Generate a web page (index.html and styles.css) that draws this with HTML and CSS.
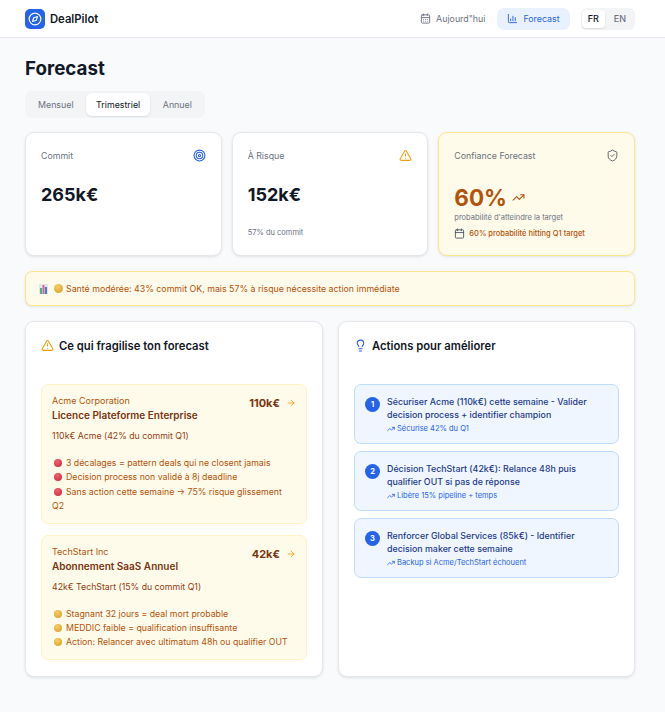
FILE: index.html
```html
<!DOCTYPE html>
<html lang="fr">
<head>
    <meta charset="UTF-8">
    <meta name="viewport" content="width=device-width, initial-scale=1.0">
    <title>DealPilot - Forecast</title>
    <link rel="stylesheet" href="styles.css">
</head>
<body>
    <header class="topbar">
        <div class="brand">
            <span class="brand-logo">
                <svg width="14" height="14" viewBox="0 0 24 24" fill="none" stroke="#fff" stroke-width="2" stroke-linecap="round" stroke-linejoin="round"><circle cx="12" cy="12" r="10"/><path d="M16.2 7.8l-2 6.4-6.4 2 2-6.4z"/></svg>
            </span>
            <span class="brand-name">DealPilot</span>
        </div>
        <nav class="topnav">
            <a class="nav-link">
                <svg width="11" height="11" viewBox="0 0 24 24" fill="none" stroke="currentColor" stroke-width="2" stroke-linecap="round" stroke-linejoin="round"><path d="M8 2v4M16 2v4"/><rect x="3" y="4" width="18" height="18" rx="2"/><path d="M3 10h18M8 14h.01M12 14h.01M16 14h.01M8 18h.01M12 18h.01M16 18h.01"/></svg>
                Aujourd"hui
            </a>
            <a class="nav-link nav-active">
                <svg width="11" height="11" viewBox="0 0 24 24" fill="none" stroke="currentColor" stroke-width="2" stroke-linecap="round" stroke-linejoin="round"><path d="M3 3v16a2 2 0 0 0 2 2h16"/><path d="M8 17v-4M13 17V7M18 17V10"/></svg>
                Forecast
            </a>
            <div class="lang">
                <span class="lang-btn lang-active">FR</span>
                <span class="lang-btn">EN</span>
            </div>
        </nav>
    </header>

    <main class="page">
        <h1 class="page-title">Forecast</h1>
        <div class="tabs">
            <span class="tab">Mensuel</span>
            <span class="tab tab-active">Trimestriel</span>
            <span class="tab">Annuel</span>
        </div>

        <section class="stats">
            <div class="stat">
                <div class="stat-head">
                    <span>Commit</span>
                    <svg width="13" height="13" viewBox="0 0 24 24" fill="none" stroke="#2563eb" stroke-width="2"><circle cx="12" cy="12" r="10"/><circle cx="12" cy="12" r="6"/><circle cx="12" cy="12" r="2"/></svg>
                </div>
                <div class="stat-value">265k€</div>
            </div>
            <div class="stat">
                <div class="stat-head">
                    <span>À Risque</span>
                    <svg width="13" height="13" viewBox="0 0 24 24" fill="none" stroke="#f59e0b" stroke-width="2" stroke-linecap="round" stroke-linejoin="round"><path d="M21.73 18l-8-14a2 2 0 0 0-3.48 0l-8 14A2 2 0 0 0 4 21h16a2 2 0 0 0 1.73-3"/><path d="M12 9v4M12 17h.01"/></svg>
                </div>
                <div class="stat-value">152k€</div>
                <div class="stat-note">57% du commit</div>
            </div>
            <div class="stat stat-warn">
                <div class="stat-head">
                    <span>Confiance Forecast</span>
                    <svg width="13" height="13" viewBox="0 0 24 24" fill="none" stroke="#4b5563" stroke-width="1.6" stroke-linecap="round" stroke-linejoin="round"><path d="M20 13c0 5-3.5 7.5-7.66 8.95a1 1 0 0 1-.67-.01C7.5 20.5 4 18 4 13V6a1 1 0 0 1 1-1c2 0 4.5-1.2 6.24-2.72a1.17 1.17 0 0 1 1.52 0C14.51 3.81 17 5 19 5a1 1 0 0 1 1 1z"/><path d="M9 12l2 2 4-4"/></svg>
                </div>
                <div class="confidence">
                    <span class="confidence-value">60%</span>
                    <svg width="13" height="13" viewBox="0 0 24 24" fill="none" stroke="#b45309" stroke-width="2" stroke-linecap="round" stroke-linejoin="round"><path d="M22 7l-8.5 8.5-5-5L2 17"/><path d="M16 7h6v6"/></svg>
                </div>
                <div class="confidence-note">probabilité d'atteindre la target</div>
                <div class="confidence-row">
                    <svg width="11" height="11" viewBox="0 0 24 24" fill="none" stroke="#4b5563" stroke-width="2" stroke-linecap="round" stroke-linejoin="round"><path d="M8 2v4M16 2v4"/><rect x="3" y="4" width="18" height="18" rx="2"/><path d="M3 10h18"/></svg>
                    <span>60% probabilité hitting Q1 target</span>
                </div>
            </div>
        </section>

        <div class="banner">
            <svg class="chart-emoji" width="9" height="10" viewBox="0 0 9 10"><rect width="9" height="10" fill="#dfe7ee"/><rect x="1" y="4" width="2" height="6" fill="#45b58a"/><rect x="3.5" y="1" width="2" height="9" fill="#e0607e"/><rect x="6" y="3" width="2" height="7" fill="#3b82d6"/></svg>
            <span class="dot dot-yellow"></span>
            <span>Santé modérée: 43% commit OK, mais 57% à risque nécessite action immédiate</span>
        </div>

        <section class="panels">
            <div class="panel">
                <h2 class="panel-title">
                    <svg width="13" height="13" viewBox="0 0 24 24" fill="none" stroke="#f59e0b" stroke-width="2" stroke-linecap="round" stroke-linejoin="round"><path d="M21.73 18l-8-14a2 2 0 0 0-3.48 0l-8 14A2 2 0 0 0 4 21h16a2 2 0 0 0 1.73-3"/><path d="M12 9v4M12 17h.01"/></svg>
                    Ce qui fragilise ton forecast
                </h2>
                <div class="deals">
                    <div class="deal">
                        <div class="deal-top">
                            <div>
                                <div class="deal-company">Acme Corporation</div>
                                <div class="deal-name">Licence Plateforme Enterprise</div>
                            </div>
                            <div class="deal-amount">
                                110k€
                                <svg width="10" height="10" viewBox="0 0 24 24" fill="none" stroke="#f59e0b" stroke-width="2" stroke-linecap="round" stroke-linejoin="round"><path d="M5 12h14M12 5l7 7-7 7"/></svg>
                            </div>
                        </div>
                        <p class="deal-summary">110k€ Acme (42% du commit Q1)</p>
                        <p class="deal-reasons">
                            <span class="dot dot-red"></span>3 décalages = pattern deals qui ne closent jamais<br>
                            <span class="dot dot-red"></span>Decision process non validé à 8j deadline<br>
                            <span class="dot dot-red"></span>Sans action cette semaine → 75% risque glissement Q2
                        </p>
                    </div>
                    <div class="deal">
                        <div class="deal-top">
                            <div>
                                <div class="deal-company">TechStart Inc</div>
                                <div class="deal-name">Abonnement SaaS Annuel</div>
                            </div>
                            <div class="deal-amount">
                                42k€
                                <svg width="10" height="10" viewBox="0 0 24 24" fill="none" stroke="#f59e0b" stroke-width="2" stroke-linecap="round" stroke-linejoin="round"><path d="M5 12h14M12 5l7 7-7 7"/></svg>
                            </div>
                        </div>
                        <p class="deal-summary">42k€ TechStart (15% du commit Q1)</p>
                        <p class="deal-reasons">
                            <span class="dot dot-yellow"></span>Stagnant 32 jours = deal mort probable<br>
                            <span class="dot dot-yellow"></span>MEDDIC faible = qualification insuffisante<br>
                            <span class="dot dot-yellow"></span>Action: Relancer avec ultimatum 48h ou qualifier OUT
                        </p>
                    </div>
                </div>
            </div>

            <div class="panel">
                <h2 class="panel-title">
                    <svg width="13" height="13" viewBox="0 0 24 24" fill="none" stroke="#2563eb" stroke-width="2" stroke-linecap="round" stroke-linejoin="round"><path d="M15 14c.2-1 .7-1.7 1.5-2.5 1-.9 1.5-2.2 1.5-3.5A6 6 0 0 0 6 8c0 1 .2 2.2 1.5 3.5.7.7 1.3 1.5 1.5 2.5"/><path d="M9 18h6M10 22h4"/></svg>
                    Actions pour améliorer
                </h2>
                <div class="actions">
                    <div class="action">
                        <span class="action-num">1</span>
                        <div>
                            <div class="action-text">Sécuriser Acme (110k€) cette semaine - Valider decision process + identifier champion</div>
                            <div class="action-note">
                                <svg width="8" height="8" viewBox="0 0 24 24" fill="none" stroke="currentColor" stroke-width="2.5" stroke-linecap="round" stroke-linejoin="round"><path d="M22 7l-8.5 8.5-5-5L2 17"/><path d="M16 7h6v6"/></svg>
                                Sécurise 42% du Q1
                            </div>
                        </div>
                    </div>
                    <div class="action">
                        <span class="action-num">2</span>
                        <div>
                            <div class="action-text">Décision TechStart (42k€): Relance 48h puis qualifier OUT si pas de réponse</div>
                            <div class="action-note">
                                <svg width="8" height="8" viewBox="0 0 24 24" fill="none" stroke="currentColor" stroke-width="2.5" stroke-linecap="round" stroke-linejoin="round"><path d="M22 7l-8.5 8.5-5-5L2 17"/><path d="M16 7h6v6"/></svg>
                                Libère 15% pipeline + temps
                            </div>
                        </div>
                    </div>
                    <div class="action">
                        <span class="action-num">3</span>
                        <div>
                            <div class="action-text">Renforcer Global Services (85k€) - Identifier decision maker cette semaine</div>
                            <div class="action-note">
                                <svg width="8" height="8" viewBox="0 0 24 24" fill="none" stroke="currentColor" stroke-width="2.5" stroke-linecap="round" stroke-linejoin="round"><path d="M22 7l-8.5 8.5-5-5L2 17"/><path d="M16 7h6v6"/></svg>
                                Backup si Acme/TechStart échouent
                            </div>
                        </div>
                    </div>
                </div>
            </div>
        </section>
    </main>
</body>
</html>
```

FILE: styles.css
```css
* {
    box-sizing: border-box;
}
body {
    font-family: Inter, "Liberation Sans", sans-serif;
    background-color: #f9fafb;
    color: #111827;
    margin: 0;
}
.topbar {
    display: flex;
    align-items: center;
    justify-content: space-between;
    height: 38px;
    padding: 0 30px 0 25px;
    background-color: #fff;
    border-bottom: 1px solid #e5e7eb;
}
.brand {
    display: flex;
    align-items: center;
    gap: 5px;
}
.brand-logo {
    display: flex;
    align-items: center;
    justify-content: center;
    width: 20px;
    height: 20px;
    border-radius: 5px;
    background-color: #2563eb;
}
.brand-name {
    font-size: 11.25px;
    font-weight: 600;
}
.topnav {
    display: flex;
    align-items: center;
    gap: 11px;
}
.nav-link {
    display: flex;
    align-items: center;
    gap: 5px;
    padding-right: 1px;
    height: 22px;
    border-radius: 7px;
    font-size: 8.85px;
    color: #6b7280;
}
.nav-active {
    padding: 0 10px;
    background-color: #eaf1fe;
    color: #2563eb;
}
.lang {
    display: flex;
    gap: 2px;
    padding: 2px 2px 2px 1px;
    border-radius: 6px;
    background-color: #f3f4f6;
}
.lang-btn {
    padding: 3px 7px;
    border-radius: 4px;
    font-size: 9px;
    font-weight: 500;
    line-height: 12px;
    color: #6b7280;
}
.lang-active {
    padding: 3px 6px;
    background-color: #fff;
    color: #111827;
    box-shadow: 0 1px 2px rgba(0, 0, 0, 0.1);
}
.page {
    padding: 19px 30px 35px 25px;
}
.page-title {
    margin: 0 0 10px;
    font-size: 18.75px;
    line-height: 24px;
    font-weight: 700;
}
.tabs {
    display: flex;
    width: fit-content;
    gap: 2.5px;
    padding: 2px 3px;
    border-radius: 7px;
    background-color: #f3f4f6;
    margin-bottom: 14px;
}
.tab {
    padding: 0 10px;
    height: 23px;
    line-height: 23px;
    border-radius: 6px;
    font-size: 8.85px;
    color: #6b7280;
}
.tab-active {
    background-color: #fff;
    color: #111827;
    box-shadow: 0 1px 2px rgba(0, 0, 0, 0.1);
}
.stats {
    display: grid;
    grid-template-columns: repeat(3, 1fr);
    gap: 10px;
    margin-bottom: 15px;
}
.stat {
    height: 124px;
    padding: 16px 15px;
    border: 1px solid #e5e7eb;
    border-radius: 9px;
    background-color: #fff;
    box-shadow: 0 1px 3px rgba(0, 0, 0, 0.1);
}
.stat-head {
    display: flex;
    align-items: center;
    justify-content: space-between;
    height: 13px;
    font-size: 8.8px;
    color: #6b7280;
}
.stat-value {
    margin-top: 21px;
    font-size: 18px;
    line-height: 24px;
    font-weight: 700;
}
.stat-note {
    margin-top: 21px;
    font-size: 7.5px;
    line-height: 10px;
    color: #6b7280;
}
.stat-warn {
    background-color: #fffbeb;
    border-color: #fde68a;
}
.confidence {
    display: flex;
    align-items: center;
    gap: 5px;
    margin-top: 21px;
    height: 28px;
}
.confidence-value {
    font-size: 22.5px;
    font-weight: 700;
    color: #b45309;
}
.confidence-note {
    margin-top: 2px;
    font-size: 7.5px;
    line-height: 10px;
    color: #6b7280;
}
.confidence-row {
    display: flex;
    align-items: center;
    gap: 4px;
    margin-top: 5px;
    font-size: 7.5px;
    font-weight: 500;
    color: #b45309;
}
.banner {
    display: flex;
    align-items: center;
    gap: 5px;
    height: 35px;
    padding: 0 13px;
    margin-bottom: 15px;
    border: 1px solid #fde68a;
    border-radius: 7px;
    background-color: #fffbeb;
    box-shadow: 0 1px 3px rgba(0, 0, 0, 0.1);
    font-size: 8.8px;
    color: #b45309;
}
.chart-emoji {
    margin-right: 1px;
}
.dot {
    display: inline-block;
    width: 8px;
    height: 8px;
    border-radius: 50%;
    vertical-align: -1px;
}
.banner .dot {
    width: 9px;
    height: 9px;
    margin-right: -2px;
}
.deal-reasons .dot {
    margin: 0 4px 0 2px;
}
.dot-yellow {
    background: radial-gradient(circle at 40% 30%, #f5cf63, #d99a27);
}
.dot-red {
    background: radial-gradient(circle at 40% 30%, #f0626f, #c9253c);
}
.panels {
    display: grid;
    grid-template-columns: 298px 297px;
    gap: 15px;
}
.panel {
    height: 356px;
    padding: 15px;
    border: 1px solid #e5e7eb;
    border-radius: 9px;
    background-color: #fff;
    box-shadow: 0 1px 3px rgba(0, 0, 0, 0.1);
}
.panel-title {
    display: flex;
    align-items: center;
    gap: 5px;
    margin: 0 0 30px;
    height: 17px;
    font-size: 11.25px;
    font-weight: 600;
}
.deals {
    display: flex;
    flex-direction: column;
    gap: 11px;
}
.deal {
    padding: 9px 10px 9px;
    border: 1px solid #fef3c7;
    border-radius: 7px;
    background-color: #fffbeb;
    color: #92400e;
    font-size: 8.75px;
    line-height: 14px;
}
.deal-top {
    display: flex;
    justify-content: space-between;
}
.deal-company {
    font-size: 9px;
    color: #b45309;
}
.deal-name {
    font-size: 10px;
    font-weight: 600;
    color: #78350f;
}
.deal-amount {
    display: flex;
    align-items: center;
    gap: 6px;
    height: 16px;
    margin-top: 1px;
    font-size: 11px;
    font-weight: 700;
    color: #78350f;
}
.deal-summary {
    margin: 7px 0 13px;
}
.deal-reasons {
    margin: 0;
    line-height: 14.4px;
    color: #b45309;
}
.actions {
    display: flex;
    flex-direction: column;
    gap: 7px;
}
.action {
    display: flex;
    gap: 7px;
    height: 60px;
    padding: 10px;
    border: 1px solid #bfdbfe;
    border-radius: 7px;
    background-color: #eff6ff;
}
.action-num {
    flex: none;
    display: flex;
    align-items: center;
    justify-content: center;
    width: 15px;
    height: 15px;
    margin-top: 2px;
    border-radius: 50%;
    background-color: #2563eb;
    color: #fff;
    font-size: 7.5px;
    font-weight: 700;
}
.action-text {
    font-size: 8.85px;
    line-height: 13px;
    font-weight: 500;
    color: #1e3a8a;
}
.action-note {
    display: flex;
    align-items: center;
    gap: 2px;
    margin-top: 3px;
    font-size: 7.5px;
    line-height: 10px;
    color: #2563eb;
}
```
